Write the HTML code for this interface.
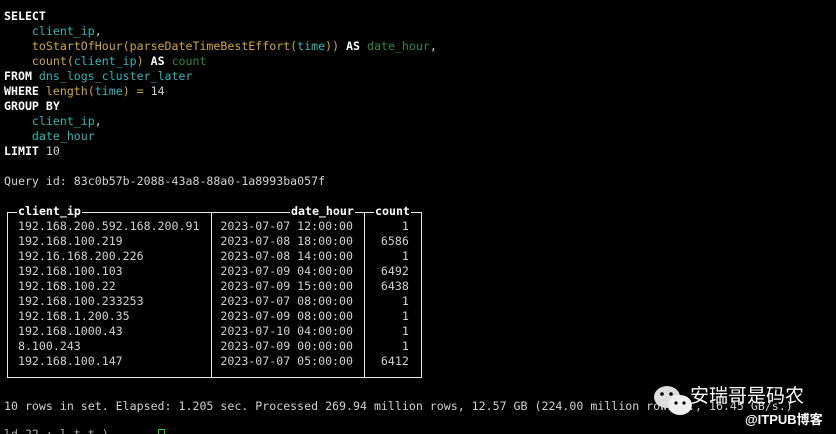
<!DOCTYPE html>
<html><head><meta charset="utf-8"><style>
html,body{margin:0;padding:0;background:#000;width:836px;height:434px;overflow:hidden;position:relative}
pre{position:absolute;left:4px;top:9px;margin:0;font-family:"DejaVu Sans Mono","Liberation Mono",monospace;font-size:11.6px;line-height:15px;color:#d2d2d2;white-space:pre}
b{color:#fff}
.c{color:#2fb4b4}.y{color:#cfa83a}.g{color:#2b8a3a}
.l{position:absolute;background:#e8e8e8}
.t{position:absolute;font-family:"DejaVu Sans Mono",monospace;font-size:11.6px;line-height:15px;color:#fff;font-weight:bold;background:#000;padding:0 1px}
</style></head><body>
<pre><b>SELECT</b>
    <span class="c">client_ip</span>,
    <span class="y">toStartOfHour(parseDateTimeBestEffort(</span><span class="c">time</span><span class="y">))</span> <b>AS</b> <span class="g">date_hour</span>,
    <span class="y">count(</span><span class="c">client_ip</span><span class="y">)</span> <b>AS</b> <span class="g">count</span>
<b>FROM</b> <span class="c">dns_logs_cluster_later</span>
<b>WHERE</b> <span class="y">length(</span><span class="c">time</span><span class="y">) =</span> 14
<b>GROUP BY</b>
    <span class="c">client_ip</span>,
    <span class="c">date_hour</span>
<b>LIMIT</b> 10

Query id: 83c0b57b-2088-43a8-88a0-1a8993ba057f


  192.168.200.592.168.200.91   2023-07-07 12:00:00       1
  192.168.100.219              2023-07-08 18:00:00    6586
  192.16.168.200.226           2023-07-08 14:00:00       1
  192.168.100.103              2023-07-09 04:00:00    6492
  192.168.100.22               2023-07-09 15:00:00    6438
  192.168.100.233253           2023-07-07 08:00:00       1
  192.168.1.200.35             2023-07-09 08:00:00       1
  192.168.1000.43              2023-07-10 04:00:00       1
  8.100.243                    2023-07-09 00:00:00       1
  192.168.100.147              2023-07-07 05:00:00    6412


10 rows in set. Elapsed: 1.205 sec. Processed 269.94 million rows, 12.57 GB (224.00 million rows/s., 16.45 GB/s.)
</pre>
<div class="l" style="left:7px;top:212px;width:415px;height:1px"></div>
<div class="l" style="left:7px;top:377px;width:415px;height:1px"></div>
<div class="l" style="left:7px;top:212px;width:1px;height:166px"></div>
<div class="l" style="left:211px;top:212px;width:1px;height:166px"></div>
<div class="l" style="left:364px;top:212px;width:1px;height:166px"></div>
<div class="l" style="left:421px;top:212px;width:1px;height:166px"></div>
<div class="t" style="left:17px;top:204px">client_ip</div>
<div class="t" style="left:290px;top:204px">date_hour</div>
<div class="t" style="left:374px;top:204px">count</div>
<div style="position:absolute;left:4px;top:427px;font-family:'DejaVu Sans Mono',monospace;font-size:11.6px;color:#aaa">ld 22 :    l t t    )</div>
<div style="position:absolute;left:158px;top:429px;width:5px;height:7px;border:1px solid #2c2"></div>
<svg style="position:absolute;left:651px;top:383px" width="46" height="36" viewBox="0 0 46 36">
<ellipse cx="16" cy="14" rx="13" ry="11" fill="#ddd"/>
<ellipse cx="29" cy="22" rx="12" ry="10" fill="#eee"/>
<circle cx="11" cy="11" r="1.8" fill="#000"/><circle cx="20" cy="11" r="1.8" fill="#000"/>
<circle cx="25" cy="20" r="1.6" fill="#000"/><circle cx="33" cy="20" r="1.6" fill="#000"/>
</svg>
<div style="position:absolute;left:690px;top:383px;font-family:'Noto Sans CJK SC',sans-serif;font-size:19px;color:#fff;line-height:24px">安瑞哥是码农</div>
<div style="position:absolute;left:745px;top:411px;font-family:'Liberation Sans','Noto Sans CJK SC',sans-serif;font-size:13px;font-weight:bold;color:#fff;line-height:18px">@ITPUB博客</div>
</body></html>
